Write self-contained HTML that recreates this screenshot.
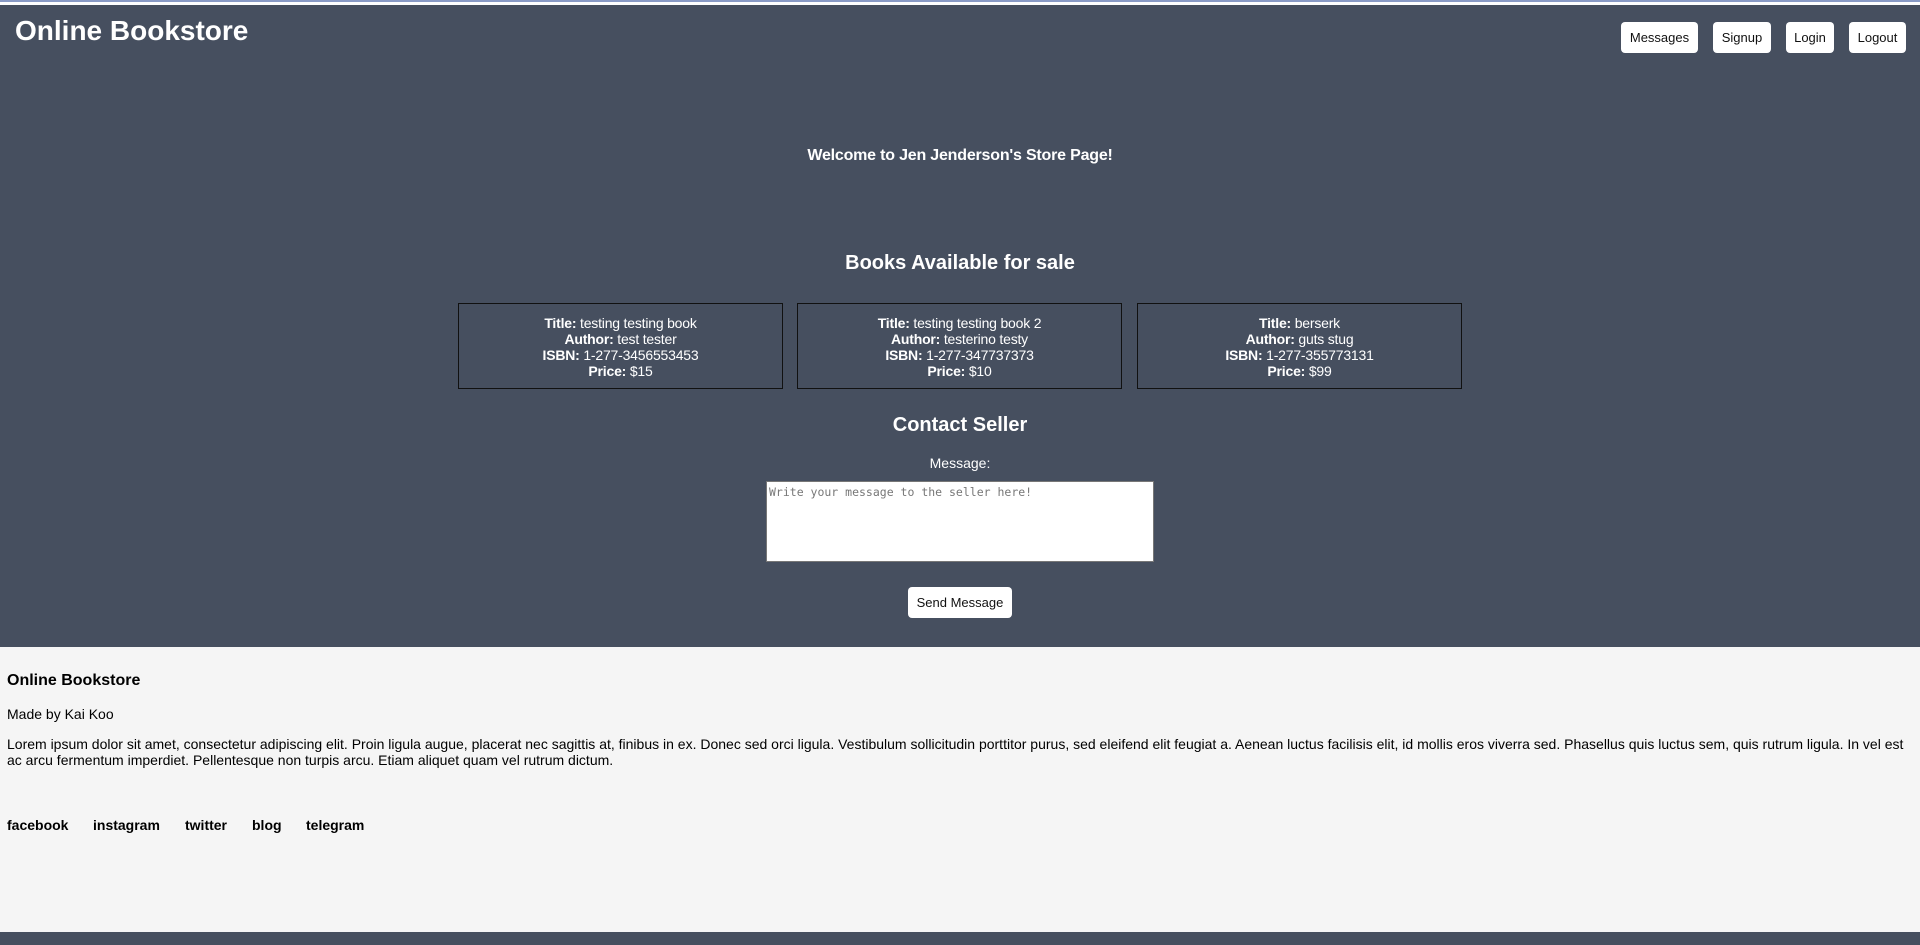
<!DOCTYPE html>
<html><head><meta charset="utf-8"><style>
*{box-sizing:border-box}
body{margin:0;width:1920px;height:945px;overflow:hidden;font-family:"Liberation Sans",Arial,sans-serif;background:#464f5f;position:relative}
.top{position:absolute;left:0;top:0;width:1920px;height:5px;background:#fff;border-top:2px solid #8a9bc6}
h1{position:absolute;left:15px;top:15px;margin:0;font-size:28px;font-weight:bold}
.btn{position:absolute;top:22px;height:31px;background:#fff;color:#111;border-radius:4px;font-size:13px;line-height:31px;text-align:center}
.c{position:absolute;left:0;width:1920px;text-align:center}
.card{position:absolute;top:303px;width:325px;height:86px;border:1px solid #111;color:#fff;font-size:14px;line-height:16px;text-align:center;padding-top:11px;letter-spacing:-0.2px}
.foot{position:absolute;left:0;top:647px;width:1920px;height:285px;background:#f5f5f5;color:#000}
.foot p{margin:0;position:absolute;left:7px;font-size:14px}
.links{position:absolute;top:170px;font-weight:bold;font-size:14px}
</style></head><body>
<div class="top"></div>
<h1 style="color:#fff;z-index:2">Online Bookstore</h1>
<div class="btn" style="left:1621px;width:77px">Messages</div>
<div class="btn" style="left:1713px;width:58px">Signup</div>
<div class="btn" style="left:1786px;width:48px">Login</div>
<div class="btn" style="left:1849px;width:57px">Logout</div>
<div class="c" style="top:147px;color:#fff;font-weight:bold;font-size:16px;letter-spacing:-0.2px">Welcome to Jen Jenderson's Store Page!</div>
<div class="c" style="top:252px;color:#fff;font-weight:bold;font-size:20px">Books Available for sale</div>
<div class="card" style="left:458px"><b>Title:</b> testing testing book<br><b>Author:</b> test tester<br><b>ISBN:</b> 1-277-3456553453<br><b>Price:</b> $15</div>
<div class="card" style="left:797px"><b>Title:</b> testing testing book 2<br><b>Author:</b> testerino testy<br><b>ISBN:</b> 1-277-347737373<br><b>Price:</b> $10</div>
<div class="card" style="left:1137px"><b>Title:</b> berserk<br><b>Author:</b> guts stug<br><b>ISBN:</b> 1-277-355773131<br><b>Price:</b> $99</div>
<div class="c" style="top:414px;color:#fff;font-weight:bold;font-size:20px">Contact Seller</div>
<div class="c" style="top:455px;color:#fff;font-size:14px">Message:</div>
<div style="position:absolute;left:766px;top:481px;width:388px;height:81px;background:#fff;border:1px solid #777;font-family:'DejaVu Sans Mono','Liberation Mono',monospace;font-size:11.5px;color:#777;padding:3px 2px">Write your message to the seller here!</div>
<div class="btn" style="left:908px;top:587px;width:104px;height:31px">Send Message</div>
<div class="foot">
<p style="top:25px;font-weight:bold;font-size:16px">Online Bookstore</p>
<p style="top:59px">Made by Kai Koo</p>
<p style="top:89px;width:1905px;line-height:16px">Lorem ipsum dolor sit amet, consectetur adipiscing elit. Proin ligula augue, placerat nec sagittis at, finibus in ex. Donec sed orci ligula. Vestibulum sollicitudin porttitor purus, sed eleifend elit feugiat a. Aenean luctus facilisis elit, id mollis eros viverra sed. Phasellus quis luctus sem, quis rutrum ligula. In vel est ac arcu fermentum imperdiet. Pellentesque non turpis arcu. Etiam aliquet quam vel rutrum dictum.</p>
<span class="links" style="left:7px">facebook</span>
<span class="links" style="left:93px">instagram</span>
<span class="links" style="left:185px">twitter</span>
<span class="links" style="left:252px">blog</span>
<span class="links" style="left:306px">telegram</span>
</div>
</body></html>
